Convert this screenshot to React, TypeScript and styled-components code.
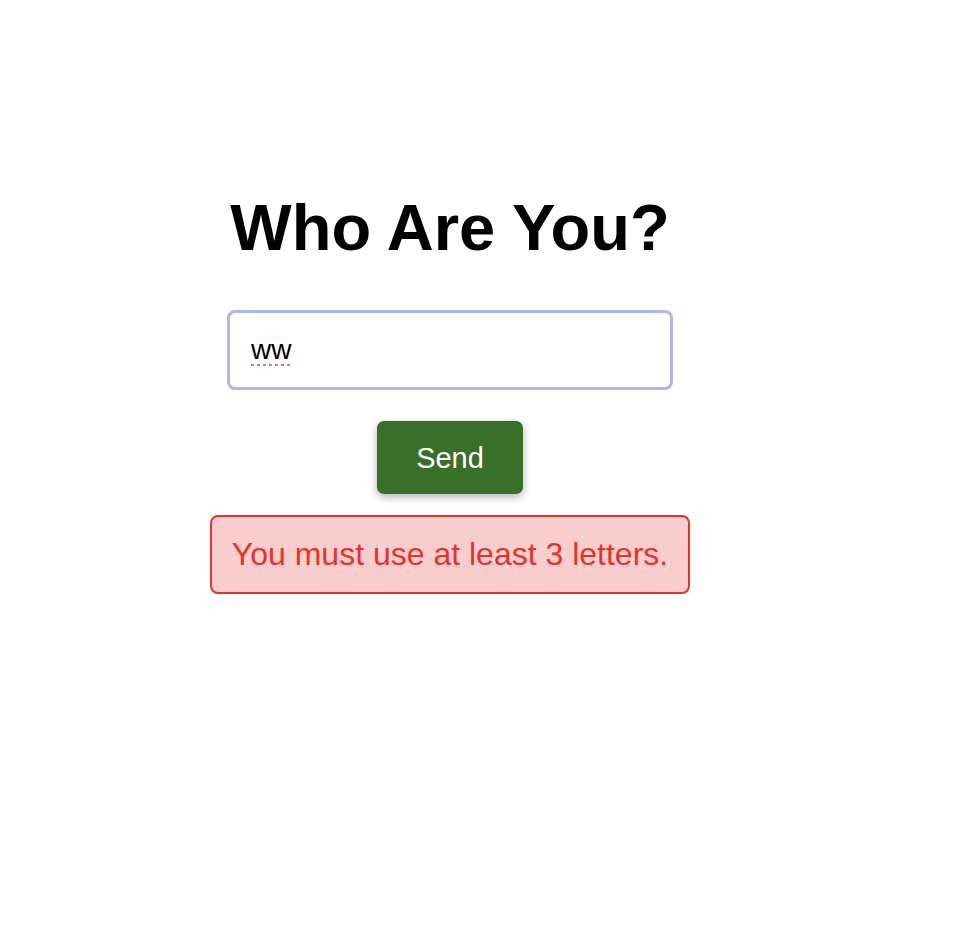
import React from "react";
import styled, { createGlobalStyle } from "styled-components";

const Global = createGlobalStyle`
  html, body { margin: 0; padding: 0; background: #fff; }
  body { font-family: "Liberation Sans", Arial, sans-serif; }
`;

const Page = styled.div`
  width: 900px;
  padding-top: 189px;
  display: flex;
  flex-direction: column;
  align-items: center;
`;

const Title = styled.h1`
  margin: 0;
  font-size: 65px;
  font-weight: 700;
  line-height: 78px;
  color: #000;
`;

const Input = styled.input`
  box-sizing: border-box;
  margin-top: 43px;
  width: 446px;
  height: 80px;
  border: 3px solid #b2b2f6;
  border-radius: 8px;
  padding: 0 21px;
  font-family: "Liberation Sans", Arial, sans-serif;
  font-size: 28px;
  color: #000;
  outline: none;
  text-decoration: underline dotted #f07060;
  text-decoration-thickness: 3px;
  text-underline-offset: 5px;
`;

const Button = styled.button`
  margin-top: 31px;
  width: 146px;
  height: 73px;
  border: none;
  border-radius: 7px;
  padding: 2px 0 0;
  background: #386f29;
  color: #fff;
  font-family: "Liberation Sans", Arial, sans-serif;
  font-size: 29px;
  box-shadow: 0 3px 8px rgba(0, 0, 0, 0.3);
  cursor: pointer;
`;

const ErrorBox = styled.div`
  box-sizing: border-box;
  margin-top: 21px;
  width: 480px;
  height: 79px;
  border: 2px solid #e5332b;
  border-radius: 8px;
  background: #f7cdcd;
  color: #e5332b;
  font-size: 32px;
  display: flex;
  align-items: center;
  justify-content: center;
`;

export default function App() {
  return (
    <>
      <Global />
      <Page>
        <Title>Who Are You?</Title>
        <Input defaultValue="ww" spellCheck={false} />
        <Button>Send</Button>
        <ErrorBox>You must use at least 3 letters.</ErrorBox>
      </Page>
    </>
  );
}
